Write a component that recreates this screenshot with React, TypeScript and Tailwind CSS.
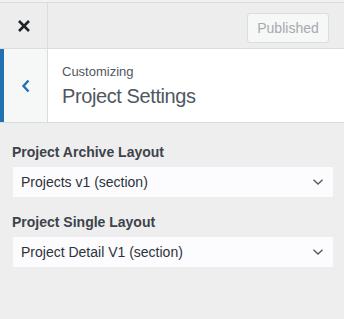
import React from "react";

export default function App() {
  return (
    <div
      className="w-[344px] h-[319px] bg-[#eeeeef] overflow-hidden"
      style={{ fontFamily: '"Liberation Sans", Arial, sans-serif' }}
    >
      <div className="h-[2px] bg-[#f1f1f2]" />
      <div className="flex h-[47px] border-y border-[#dcdcde] bg-[#ededee]">
        <button className="w-[48px] h-full border-r border-[#dcdcde] flex items-center justify-center">
          <svg width="14" height="14" viewBox="0 0 14 14">
            <path d="M2 2 L12 12 M12 2 L2 12" stroke="#1d2327" strokeWidth="2.6" strokeLinecap="butt" />
          </svg>
        </button>
        <div className="flex-1 flex justify-end pr-[15px] pt-[10px]">
          <div className="w-[82px] h-[30px] rounded-[3px] border border-[#dcdcde] bg-[#f6f7f7] flex items-center justify-center text-[14px] text-[#a7aaad]">
            Published
          </div>
        </div>
      </div>
      <div className="flex h-[74px] bg-white border-b border-[#dcdcde]">
        <div className="w-[4px] bg-[#2271b1]" />
        <div className="w-[44px] bg-[#f6f7f7] border-r border-[#dcdcde] flex items-center justify-center pt-[1px]">
          <svg width="10" height="14" viewBox="0 0 10 14">
            <path d="M7.5 1.5 L2.5 7 L7.5 12.5" stroke="#2271b1" strokeWidth="2.4" fill="none" />
          </svg>
        </div>
        <div className="pl-[14px] pt-[15px]">
          <div className="text-[13px] leading-[16px] text-[#50575e]">Customizing</div>
          <div className="mt-[4px] text-[20px] leading-[24px] tracking-[-0.4px] text-[#50575e]">
            Project Settings
          </div>
        </div>
      </div>
      <div className="px-[12px] pt-[20px]">
        <div className="text-[14px] leading-[18px] font-bold text-[#3c434a]">Project Archive Layout</div>
        <Select value="Projects v1 (section)" />
        <div className="mt-[16px] text-[14px] leading-[18px] font-bold text-[#3c434a]">Project Single Layout</div>
        <Select value="Project Detail V1 (section)" />
      </div>
    </div>
  );
}

function Select({ value }: { value: string }) {
  return (
    <div className="mt-[6px] ml-[1px] w-[320px] h-[30px] bg-[#fcfcff] flex items-center justify-between pl-[8px] pr-[9px]">
      <span className="text-[14px] text-[#2c3338]">{value}</span>
      <svg width="12" height="8" viewBox="0 0 12 8">
        <path d="M1.5 1.8 L6 6 L10.5 1.8" stroke="#50575e" strokeWidth="1.3" fill="none" />
      </svg>
    </div>
  );
}
